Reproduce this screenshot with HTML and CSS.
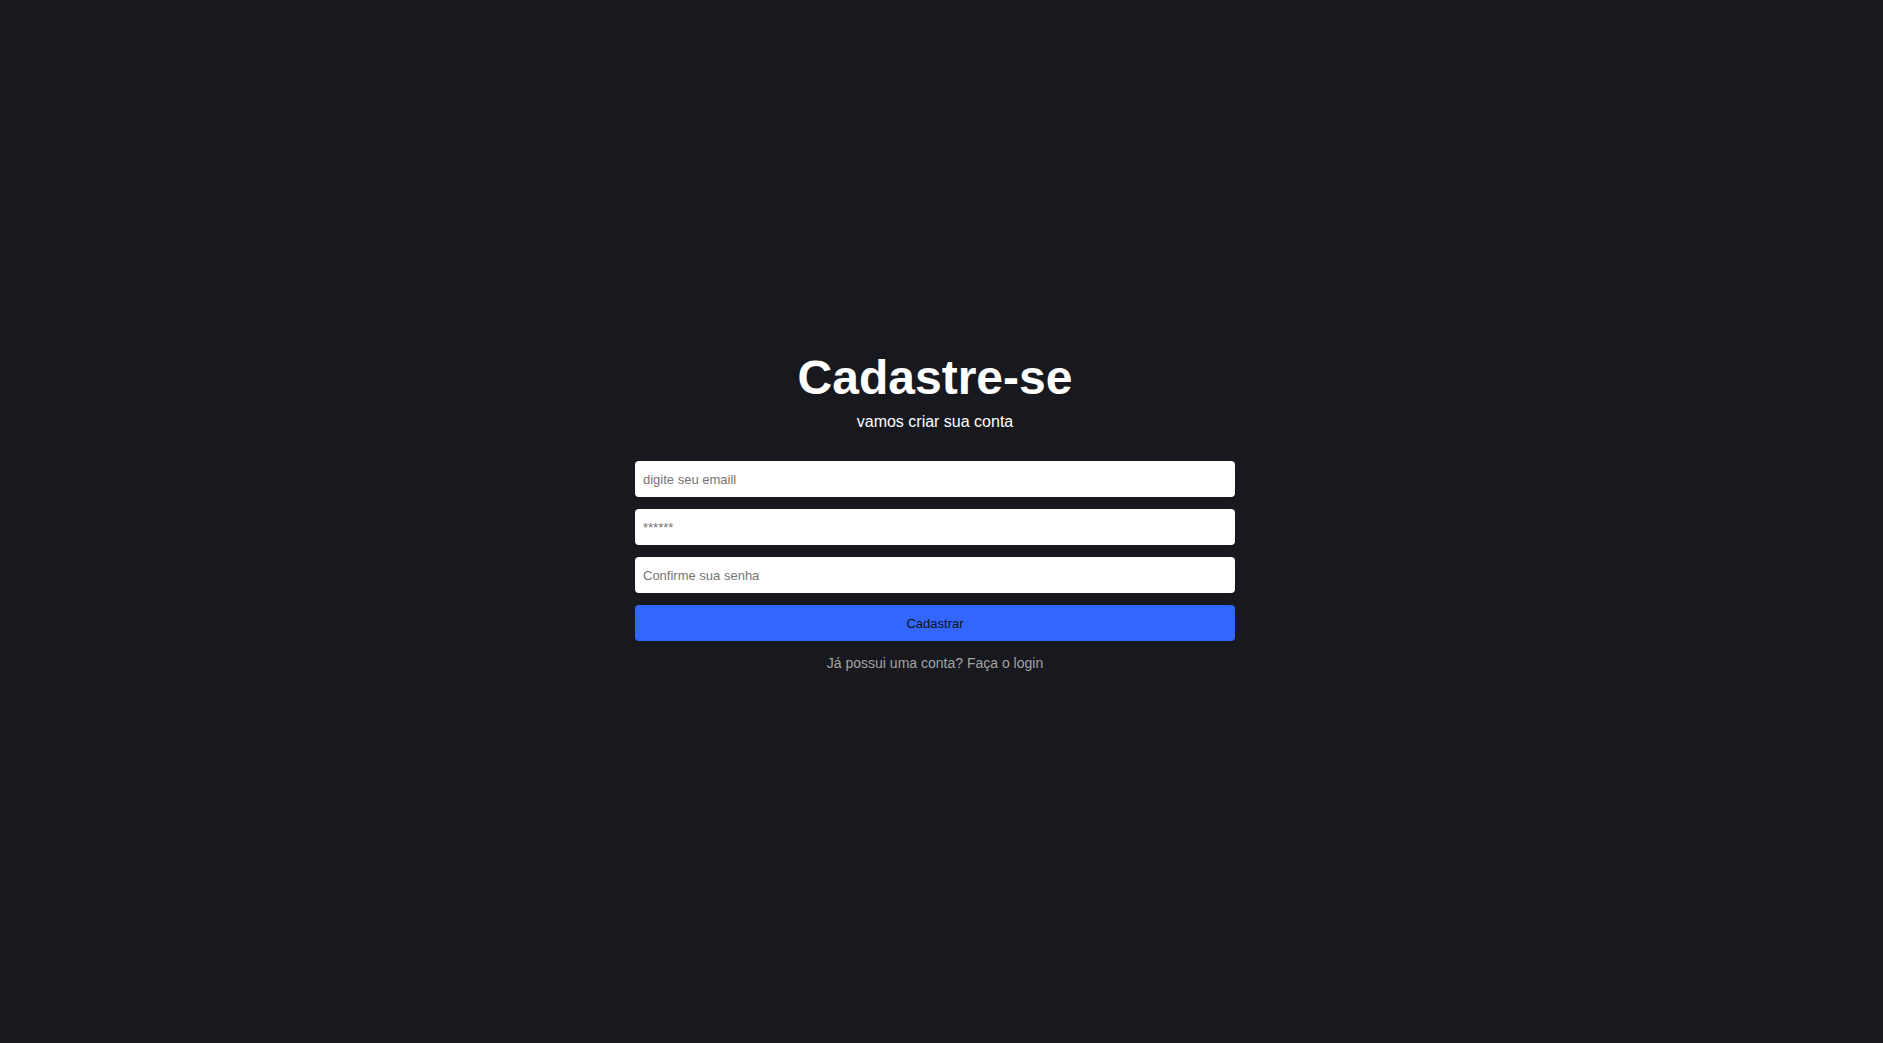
FILE: index.html
```html
<!DOCTYPE html>
<html lang="pt-BR">
<head>
<meta charset="utf-8">
<title>Cadastre-se</title>
<link rel="stylesheet" href="styles.css">
</head>
<body>
<main class="page">
  <div class="card">
    <h1 class="title">Cadastre-se</h1>
    <p class="subtitle">vamos criar sua conta</p>
    <form class="form">
      <input class="field" type="email" placeholder="digite seu emaill">
      <input class="field" type="password" placeholder="******">
      <input class="field" type="password" placeholder="Confirme sua senha">
      <button class="btn" type="button">Cadastrar</button>
    </form>
    <a class="login-link" href="#">Já possui uma conta? Faça o login</a>
  </div>
</main>
</body>
</html>
```

FILE: styles.css
```css
* { box-sizing: border-box; }
html, body {
  margin: 0;
  padding: 0;
  background: #18191e;
  font-family: "Liberation Sans", Arial, sans-serif;
}
.page {
  min-height: 100vh;
  display: flex;
  align-items: center;
  justify-content: center;
}
.card {
  width: 600px;
  display: flex;
  flex-direction: column;
  align-items: center;
  margin-right: 13px;
  margin-bottom: 22px;
}
.title {
  margin: 0;
  font-size: 48px;
  font-weight: bold;
  color: #ffffff;
}
.subtitle {
  margin: 8px 0 0;
  font-size: 16px;
  color: #ffffff;
}
.form {
  width: 100%;
  margin-top: 30px;
  display: flex;
  flex-direction: column;
  gap: 12px;
}
.field {
  width: 100%;
  height: 36px;
  border: none;
  border-radius: 4px;
  padding: 0 8px;
  background: #ffffff;
  font-family: "Liberation Sans", Arial, sans-serif;
  font-size: 13px;
  color: #222;
  outline: none;
}
.field::placeholder { color: #757575; }
.btn {
  width: 100%;
  height: 36px;
  border: none;
  border-radius: 4px;
  background: #3366ff;
  color: #111111;
  font-family: "Liberation Sans", Arial, sans-serif;
  font-size: 13px;
  cursor: pointer;
}
.login-link {
  margin-top: 14px;
  font-size: 14px;
  color: #a3a3a3;
  text-decoration: none;
}
```
